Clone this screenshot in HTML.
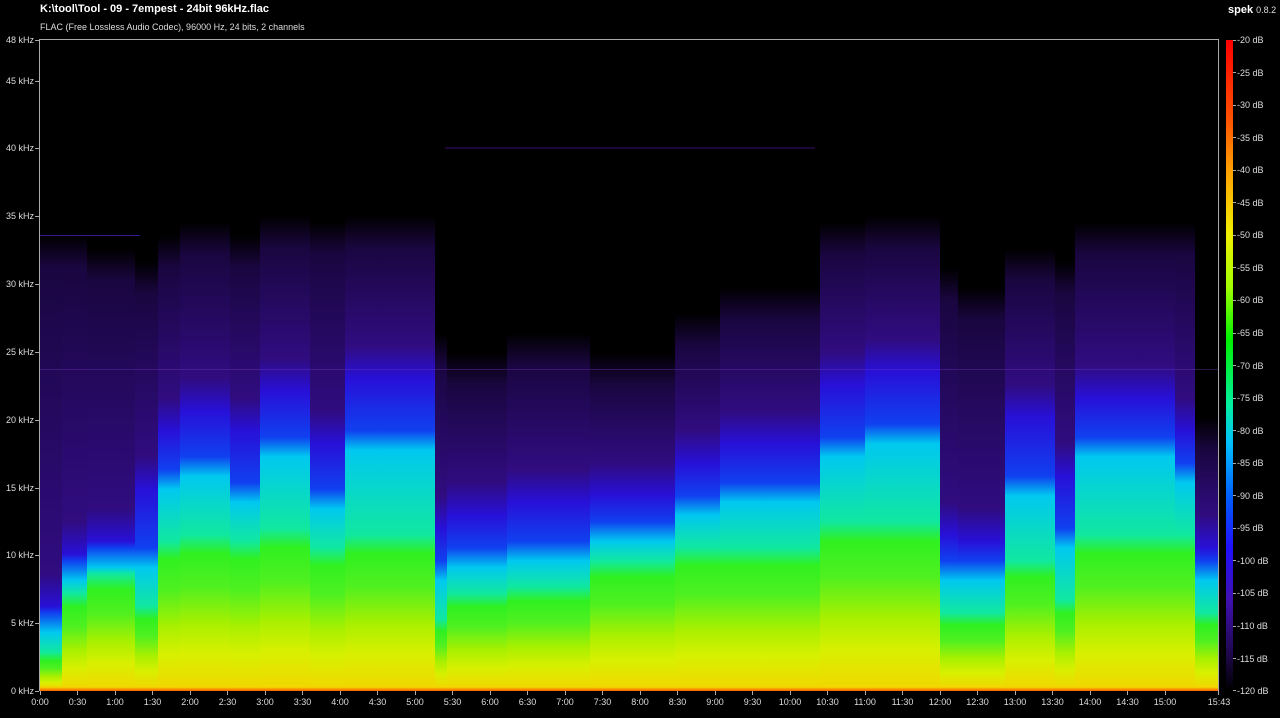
<!DOCTYPE html>
<html><head><meta charset="utf-8"><style>
body{margin:0;width:1280px;height:718px;background:#000;overflow:hidden;font-family:"Liberation Sans",sans-serif;color:#ddd;position:relative}
.t{position:absolute;white-space:nowrap}
#plot{position:absolute;left:40px;top:40px;width:1179px;height:651px;overflow:hidden;background:#000}
.c{position:absolute;top:0;bottom:0;background:linear-gradient(to top,#ff5a00 0%,#f0d800 0.6%,#d8f000 calc(var(--g)*0.25%),#a8f000 calc(var(--g)*0.45%),#50f020 calc(var(--g)*0.7%),#30f020 calc(var(--g)*0.92%),#10e8a0 calc(var(--g)*1% + 1%),#00c8f0 calc(var(--c)*1%),#1040f0 calc(var(--c)*1% + 3%),#2810d8 calc(var(--b)*1%),#300c80 calc(var(--b)*1% + 5%),#1a0640 calc(var(--p)*1% - 5%),#000 calc(var(--p)*1%))}
.frame{position:absolute;left:39px;top:39px;width:1180px;height:652px;border:1px solid #aaa;border-bottom:none;box-sizing:border-box}
.yl{position:absolute;right:1246px;font-size:9px;color:#ddd;transform:translateY(-50%)}
.yt{position:absolute;left:35px;width:4px;height:1px;background:#aaa}
.xl{position:absolute;top:697px;font-size:9px;color:#ddd;transform:translateX(-50%)}
.xt{position:absolute;top:691px;width:1px;height:4px;background:#aaa}
.dl{position:absolute;left:1237px;font-size:9px;color:#ddd;transform:translateY(-50%)}
.dt{position:absolute;left:1233px;width:3px;height:1px;background:#aaa}
#bar{position:absolute;left:1226px;top:40px;width:7px;height:651px;background:linear-gradient(to bottom,#ff0000 0%,#ff5000 12%,#ffa000 20%,#f0f000 30%,#a0ff00 38%,#00f000 46%,#00f0a0 56%,#00c0ff 62%,#0060ff 70%,#2010ff 78%,#4010b0 86%,#200850 94%,#000 100%)}
</style></head><body>
<div class="t" style="left:40px;top:3px;font-size:11px;font-weight:bold;color:#fff">K:\tool\Tool - 09 - 7empest - 24bit 96kHz.flac</div>
<div class="t" style="left:40px;top:22px;font-size:9px;color:#ddd">FLAC (Free Lossless Audio Codec), 96000 Hz, 24 bits, 2 channels</div>
<div class="t" style="left:1228px;top:4px;font-size:11px;font-weight:bold;color:#fff">spek <span style="font-weight:normal;font-size:9px;color:#ddd">0.8.2</span></div>
<div id="plot">
<div class="c" style="left:0;width:22px;--g:5;--c:9;--b:13;--p:70"></div>
<div class="c" style="left:22px;width:25px;--g:14;--c:17;--b:21;--p:70"></div>
<div class="c" style="left:47px;width:48px;--g:17;--c:19;--b:23;--p:68"></div>
<div class="c" style="left:95px;width:23px;--g:12;--c:19;--b:31;--p:66"></div>
<div class="c" style="left:118px;width:22px;--g:22;--c:31;--b:40;--p:70"></div>
<div class="c" style="left:140px;width:50px;--g:23;--c:33;--b:43;--p:72"></div>
<div class="c" style="left:190px;width:30px;--g:22;--c:29;--b:40;--p:70"></div>
<div class="c" style="left:220px;width:50px;--g:24;--c:36;--b:46;--p:73"></div>
<div class="c" style="left:270px;width:35px;--g:21;--c:28;--b:38;--p:72"></div>
<div class="c" style="left:305px;width:90px;--g:23;--c:37;--b:48;--p:73"></div>
<div class="c" style="left:395px;width:12px;--g:10;--c:17;--b:25;--p:55"></div>
<div class="c" style="left:407px;width:60px;--g:14;--c:19;--b:27;--p:52"></div>
<div class="c" style="left:467px;width:83px;--g:15;--c:20;--b:29;--p:55"></div>
<div class="c" style="left:550px;width:85px;--g:19;--c:23;--b:30;--p:52"></div>
<div class="c" style="left:635px;width:45px;--g:21;--c:27;--b:35;--p:58"></div>
<div class="c" style="left:680px;width:100px;--g:21;--c:29;--b:38;--p:62"></div>
<div class="c" style="left:780px;width:45px;--g:25;--c:36;--b:47;--p:72"></div>
<div class="c" style="left:825px;width:75px;--g:25;--c:38;--b:49;--p:73"></div>
<div class="c" style="left:900px;width:18px;--g:11;--c:17;--b:24;--p:65"></div>
<div class="c" style="left:918px;width:47px;--g:11;--c:17;--b:23;--p:62"></div>
<div class="c" style="left:965px;width:50px;--g:19;--c:30;--b:42;--p:68"></div>
<div class="c" style="left:1015px;width:20px;--g:13;--c:22;--b:33;--p:66"></div>
<div class="c" style="left:1035px;width:100px;--g:23;--c:36;--b:45;--p:72"></div>
<div class="c" style="left:1135px;width:20px;--g:23;--c:32;--b:40;--p:72"></div>
<div class="c" style="left:1155px;width:24px;--g:11;--c:17;--b:22;--p:42"></div>
<div style="position:absolute;left:0;width:100px;top:195px;height:1px;background:#3a1a90"></div>
<div style="position:absolute;left:405px;width:370px;top:107px;height:2px;background:#1c0838"></div>
<div style="position:absolute;left:0;width:1179px;top:329px;height:1px;background:rgba(120,60,200,0.35)"></div>
</div>
<div class="frame"></div>
<div id="bar"></div>
<div class="yl" style="top:40px">48 kHz</div><div class="yt" style="top:40px"></div>
<div class="yl" style="top:81px">45 kHz</div><div class="yt" style="top:81px"></div>
<div class="yl" style="top:148px">40 kHz</div><div class="yt" style="top:148px"></div>
<div class="yl" style="top:216px">35 kHz</div><div class="yt" style="top:216px"></div>
<div class="yl" style="top:284px">30 kHz</div><div class="yt" style="top:284px"></div>
<div class="yl" style="top:352px">25 kHz</div><div class="yt" style="top:352px"></div>
<div class="yl" style="top:420px">20 kHz</div><div class="yt" style="top:420px"></div>
<div class="yl" style="top:488px">15 kHz</div><div class="yt" style="top:488px"></div>
<div class="yl" style="top:555px">10 kHz</div><div class="yt" style="top:555px"></div>
<div class="yl" style="top:623px">5 kHz</div><div class="yt" style="top:623px"></div>
<div class="yl" style="top:691px">0 kHz</div><div class="yt" style="top:691px"></div>
<div class="xl" style="left:40px">0:00</div><div class="xt" style="left:40px"></div>
<div class="xl" style="left:77.5px">0:30</div><div class="xt" style="left:77px"></div>
<div class="xl" style="left:115px">1:00</div><div class="xt" style="left:115px"></div>
<div class="xl" style="left:152.5px">1:30</div><div class="xt" style="left:152px"></div>
<div class="xl" style="left:190px">2:00</div><div class="xt" style="left:190px"></div>
<div class="xl" style="left:227.5px">2:30</div><div class="xt" style="left:227px"></div>
<div class="xl" style="left:265px">3:00</div><div class="xt" style="left:265px"></div>
<div class="xl" style="left:302.5px">3:30</div><div class="xt" style="left:302px"></div>
<div class="xl" style="left:340px">4:00</div><div class="xt" style="left:340px"></div>
<div class="xl" style="left:377.5px">4:30</div><div class="xt" style="left:377px"></div>
<div class="xl" style="left:415px">5:00</div><div class="xt" style="left:415px"></div>
<div class="xl" style="left:452.5px">5:30</div><div class="xt" style="left:452px"></div>
<div class="xl" style="left:490px">6:00</div><div class="xt" style="left:490px"></div>
<div class="xl" style="left:527.5px">6:30</div><div class="xt" style="left:527px"></div>
<div class="xl" style="left:565px">7:00</div><div class="xt" style="left:565px"></div>
<div class="xl" style="left:602.5px">7:30</div><div class="xt" style="left:602px"></div>
<div class="xl" style="left:640px">8:00</div><div class="xt" style="left:640px"></div>
<div class="xl" style="left:677.5px">8:30</div><div class="xt" style="left:677px"></div>
<div class="xl" style="left:715px">9:00</div><div class="xt" style="left:715px"></div>
<div class="xl" style="left:752.5px">9:30</div><div class="xt" style="left:752px"></div>
<div class="xl" style="left:790px">10:00</div><div class="xt" style="left:790px"></div>
<div class="xl" style="left:827.5px">10:30</div><div class="xt" style="left:827px"></div>
<div class="xl" style="left:865px">11:00</div><div class="xt" style="left:865px"></div>
<div class="xl" style="left:902.5px">11:30</div><div class="xt" style="left:902px"></div>
<div class="xl" style="left:940px">12:00</div><div class="xt" style="left:940px"></div>
<div class="xl" style="left:977.5px">12:30</div><div class="xt" style="left:977px"></div>
<div class="xl" style="left:1015px">13:00</div><div class="xt" style="left:1015px"></div>
<div class="xl" style="left:1052.5px">13:30</div><div class="xt" style="left:1052px"></div>
<div class="xl" style="left:1090px">14:00</div><div class="xt" style="left:1090px"></div>
<div class="xl" style="left:1127.5px">14:30</div><div class="xt" style="left:1127px"></div>
<div class="xl" style="left:1165px">15:00</div><div class="xt" style="left:1165px"></div>
<div class="xl" style="left:1219px">15:43</div><div class="xt" style="left:1218px"></div>
<div class="dl" style="top:40px">-20 dB</div><div class="dt" style="top:40px"></div>
<div class="dl" style="top:72.5px">-25 dB</div><div class="dt" style="top:72px"></div>
<div class="dl" style="top:105px">-30 dB</div><div class="dt" style="top:105px"></div>
<div class="dl" style="top:137.6px">-35 dB</div><div class="dt" style="top:137px"></div>
<div class="dl" style="top:170.2px">-40 dB</div><div class="dt" style="top:170px"></div>
<div class="dl" style="top:202.8px">-45 dB</div><div class="dt" style="top:202px"></div>
<div class="dl" style="top:235.3px">-50 dB</div><div class="dt" style="top:235px"></div>
<div class="dl" style="top:267.9px">-55 dB</div><div class="dt" style="top:267px"></div>
<div class="dl" style="top:300.4px">-60 dB</div><div class="dt" style="top:300px"></div>
<div class="dl" style="top:333px">-65 dB</div><div class="dt" style="top:333px"></div>
<div class="dl" style="top:365.5px">-70 dB</div><div class="dt" style="top:365px"></div>
<div class="dl" style="top:398px">-75 dB</div><div class="dt" style="top:398px"></div>
<div class="dl" style="top:430.6px">-80 dB</div><div class="dt" style="top:430px"></div>
<div class="dl" style="top:463.2px">-85 dB</div><div class="dt" style="top:463px"></div>
<div class="dl" style="top:495.7px">-90 dB</div><div class="dt" style="top:495px"></div>
<div class="dl" style="top:528.3px">-95 dB</div><div class="dt" style="top:528px"></div>
<div class="dl" style="top:560.8px">-100 dB</div><div class="dt" style="top:560px"></div>
<div class="dl" style="top:593.4px">-105 dB</div><div class="dt" style="top:593px"></div>
<div class="dl" style="top:626px">-110 dB</div><div class="dt" style="top:626px"></div>
<div class="dl" style="top:658.5px">-115 dB</div><div class="dt" style="top:658px"></div>
<div class="dl" style="top:691px">-120 dB</div><div class="dt" style="top:690px"></div>
</body></html>
